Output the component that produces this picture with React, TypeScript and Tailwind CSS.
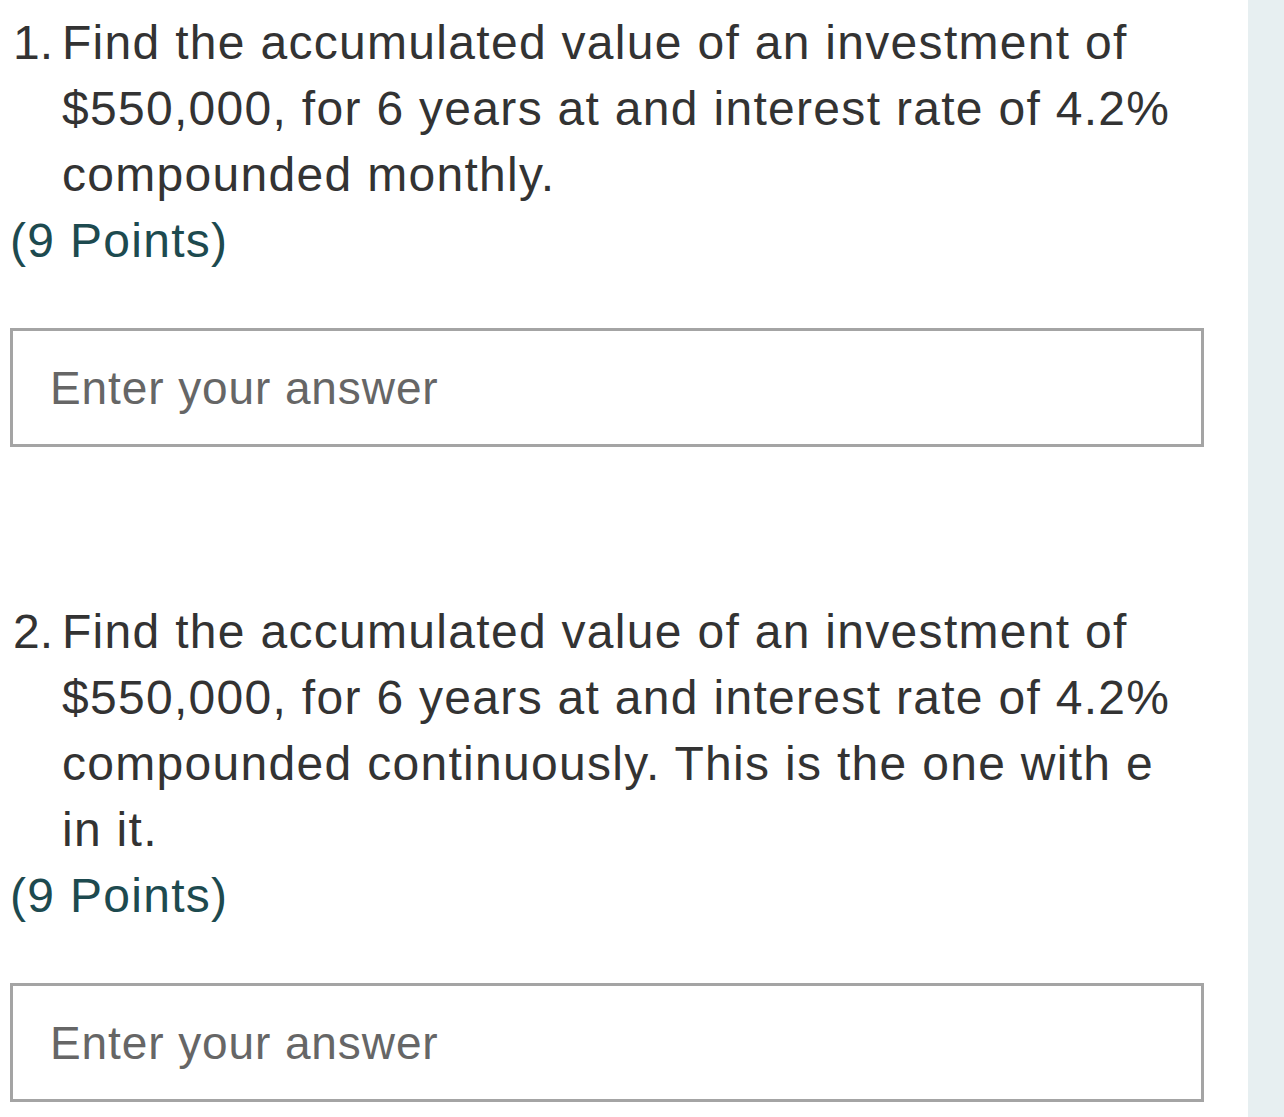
import React from "react";

const questions = [
  {
    n: "1.",
    text: "Find the accumulated value of an investment of $550,000, for 6 years at and interest rate of 4.2% compounded monthly.",
  },
  {
    n: "2.",
    text: "Find the accumulated value of an investment of $550,000, for 6 years at and interest rate of 4.2% compounded continuously. This is the one with e in it.",
  },
];

function Question({ n, text, last }: { n: string; text: string; last?: boolean }) {
  return (
    <div className={last ? "" : "mb-[152px]"}>
      <div className="flex text-[#333333]">
        <span className="w-[52px] shrink-0 pl-[3px] tracking-normal">{n}</span>
        <span className="flex-1">{text}</span>
      </div>
      <div className="text-[#1d4a4f]">(9 Points)</div>
      <div className="mt-[54px] h-[119px] border-[3px] border-[#a4a4a4] flex items-center px-[37px] text-[46px] tracking-[0.9px] text-[#666666]">
        Enter your answer
      </div>
    </div>
  );
}

export default function App() {
  return (
    <div
      className="flex min-h-[1117px] bg-white text-[48px] leading-[66px] tracking-[1.3px]"
      style={{ fontFamily: '"Liberation Sans", Arial, sans-serif' }}
    >
      <div className="w-[1194px] ml-[10px] pt-[10px]">
        {questions.map((q, i) => (
          <Question key={q.n} n={q.n} text={q.text} last={i === questions.length - 1} />
        ))}
      </div>
      <div className="flex-1" />
      <div className="w-[36px] bg-[#e7eff1]" />
    </div>
  );
}
